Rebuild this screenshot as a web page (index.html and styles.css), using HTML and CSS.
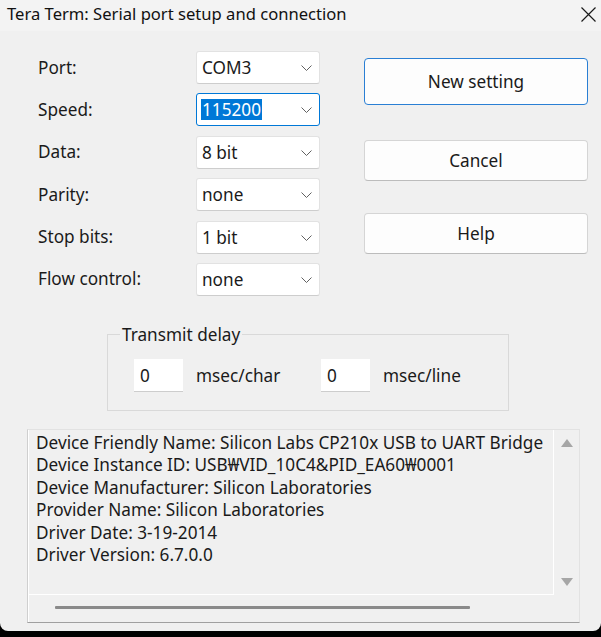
FILE: index.html
```html
<!DOCTYPE html>
<html>
<head>
<meta charset="utf-8">
<link rel="stylesheet" href="styles.css">
</head>
<body>
<div class="window">
  <div class="titlebar">
    <span class="title">Tera Term: Serial port setup and connection</span>
    <svg class="close" width="15" height="15" viewBox="0 0 15 15"><path d="M0.5 0.5 L14.5 14.5 M14.5 0.5 L0.5 14.5" stroke="#1a1a1a" stroke-width="1.2" fill="none"/></svg>
  </div>
  <div class="content">
    <div class="top">
      <div class="form">
        <span class="label">Port:</span>
        <div class="combo"><span class="value">COM3</span><svg class="chev" width="11" height="6" viewBox="0 0 11 6"><path d="M0.5 0.5 L5.5 5.5 L10.5 0.5" stroke="#606060" stroke-width="1" fill="none"/></svg></div>
        <span class="label">Speed:</span>
        <div class="combo focused"><span class="value selected">115200</span><svg class="chev" width="11" height="6" viewBox="0 0 11 6"><path d="M0.5 0.5 L5.5 5.5 L10.5 0.5" stroke="#606060" stroke-width="1" fill="none"/></svg></div>
        <span class="label">Data:</span>
        <div class="combo"><span class="value">8 bit</span><svg class="chev" width="11" height="6" viewBox="0 0 11 6"><path d="M0.5 0.5 L5.5 5.5 L10.5 0.5" stroke="#606060" stroke-width="1" fill="none"/></svg></div>
        <span class="label">Parity:</span>
        <div class="combo"><span class="value">none</span><svg class="chev" width="11" height="6" viewBox="0 0 11 6"><path d="M0.5 0.5 L5.5 5.5 L10.5 0.5" stroke="#606060" stroke-width="1" fill="none"/></svg></div>
        <span class="label">Stop bits:</span>
        <div class="combo"><span class="value">1 bit</span><svg class="chev" width="11" height="6" viewBox="0 0 11 6"><path d="M0.5 0.5 L5.5 5.5 L10.5 0.5" stroke="#606060" stroke-width="1" fill="none"/></svg></div>
        <span class="label">Flow control:</span>
        <div class="combo"><span class="value">none</span><svg class="chev" width="11" height="6" viewBox="0 0 11 6"><path d="M0.5 0.5 L5.5 5.5 L10.5 0.5" stroke="#606060" stroke-width="1" fill="none"/></svg></div>
      </div>
      <div class="buttons">
        <button class="btn primary">New setting</button>
        <button class="btn cancel">Cancel</button>
        <button class="btn help">Help</button>
      </div>
    </div>
    <fieldset class="group">
      <legend>Transmit delay</legend>
      <div class="delay-row">
        <div class="num">0</div><span class="unit">msec/char</span>
        <div class="num second">0</div><span class="unit">msec/line</span>
      </div>
    </fieldset>
    <div class="info">
      <div class="info-text">
        <div>Device Friendly Name: Silicon Labs CP210x USB to UART Bridge</div>
        <div>Device Instance ID: USB₩VID_10C4&amp;PID_EA60₩0001</div>
        <div>Device Manufacturer: Silicon Laboratories</div>
        <div>Provider Name: Silicon Laboratories</div>
        <div>Driver Date: 3-19-2014</div>
        <div>Driver Version: 6.7.0.0</div>
      </div>
      <div class="vscroll">
        <svg width="12" height="8" viewBox="0 0 12 8"><path d="M6 0 L12 8 L0 8 Z" fill="#a6a6a6"/></svg>
        <svg width="12" height="8" viewBox="0 0 12 8"><path d="M0 0 L12 0 L6 8 Z" fill="#a6a6a6"/></svg>
      </div>
      <div class="hscroll"><div class="hbar"></div></div>
      <div class="corner"></div>
    </div>
  </div>
</div>
</body>
</html>
```
FILE: styles.css
```css
* { box-sizing: border-box; }
html, body { margin: 0; padding: 0; }
body {
  background: #000;
  width: 601px;
  height: 637px;
  font-family: "Noto Sans", "Liberation Sans", sans-serif;
  font-size: 17.2px;
  color: #1a1a1a;
  overflow: hidden;
}
.window {
  width: 601px;
  height: 631px;
  background: #f0f0f0;
  border-radius: 0 0 8px 8px;
  overflow: hidden;
}
.titlebar {
  height: 31px;
  background: #f3f3f3;
  display: flex;
  align-items: center;
  justify-content: space-between;
  padding: 0 5px 4px 7px;
}
.title { font-size: 16.6px; line-height: 20px; color: #111; }
.close { margin-top: 2px; }
.content { padding-top: 20px; }
.top { display: flex; }
.form {
  display: grid;
  grid-template-columns: 158px 124px;
  grid-auto-rows: 33px;
  row-gap: 9.4px;
  padding-left: 38px;
  align-items: center;
}
.label { line-height: 20px; }
.combo {
  height: 33px;
  background: #fff;
  border: 1px solid #e2e2e2;
  border-bottom-color: #cdcdcd;
  border-radius: 3px;
  display: flex;
  align-items: center;
  justify-content: space-between;
  padding: 0 7px 0 5px;
}
.combo.focused { border-color: #0078d7; }
.value { line-height: 21px; }
.value.selected { background: #0078d7; color: #fff; padding: 0 1px; margin-left: -1px; }
.chev { margin-top: 1px; }
.buttons {
  display: flex;
  flex-direction: column;
  margin-left: 44px;
  padding-top: 7px;
  width: 224px;
}
.btn {
  font-family: inherit;
  font-size: 17.2px;
  color: #1a1a1a;
  background: #fdfdfd;
  border: 1px solid #d5d5d5;
  border-bottom-color: #bcbcbc;
  border-radius: 4px;
  height: 41px;
  padding: 0;
}
.btn.primary { height: 47px; border: 1px solid #2a7fd4; }
.btn.cancel { margin-top: 35px; }
.btn.help { margin-top: 32px; }
.group {
  margin: 28px 0 0 107px;
  width: 399px;
  border: 1px solid #d9d9d9;
  padding: 13px 0 18px 12px;
}
.group legend { padding: 0 2px; line-height: 22px; }
.delay-row { display: flex; align-items: center; padding-left: 14px; }
.num {
  width: 49px;
  height: 33px;
  background: #fff;
  border-bottom: 1px solid #cdcdcd;
  padding-left: 6px;
  line-height: 33px;
}
.unit { margin-left: 13px; width: 125px; }
.info {
  margin: 18px 0 0 27px;
  width: 553px;
  height: 194px;
  border: 1px solid #e2e2e2;
  border-bottom-color: #a0a0a0;
  border-left-color: #cfcfcf;
  display: grid;
  grid-template-columns: 1fr 25px;
  grid-template-rows: 1fr 27px;
}
.info-text {
  border-right: 1px solid #fff;
  border-bottom: 1px solid #fff;
  border-left: 1px solid #fff;
  padding: 2px 0 0 7px;
  white-space: nowrap;
  overflow: hidden;
  line-height: 22.4px;
}
.vscroll {
  display: flex;
  flex-direction: column;
  align-items: center;
  justify-content: space-between;
  padding: 9px 0 9px 1px;
}
.hscroll { border-left: 1px solid #fff; padding: 11px 0 0 26px; }
.hbar { width: 415px; height: 3px; background: #8a8a8a; border-radius: 1px; }
```
